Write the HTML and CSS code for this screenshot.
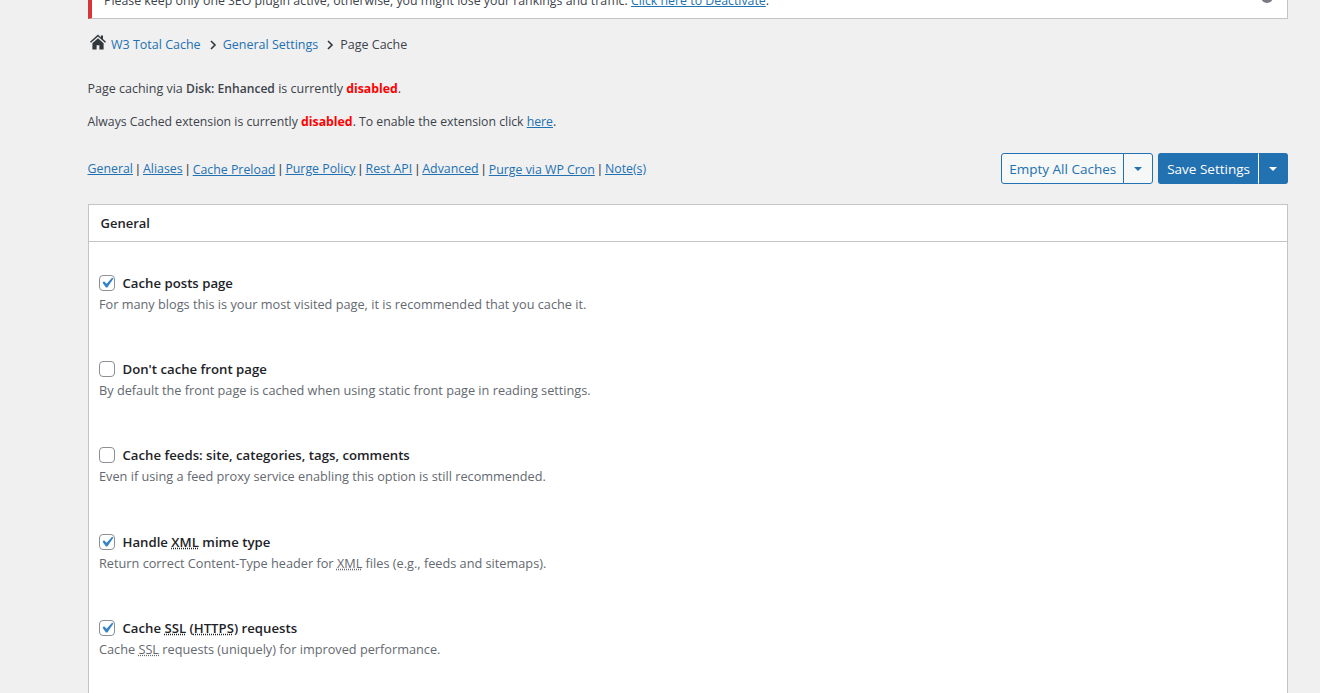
FILE: index.html
```html
<!DOCTYPE html>
<html lang="en">
<head>
<meta charset="utf-8">
<title>Page Cache</title>
<link rel="stylesheet" href="styles.css">
</head>
<body>
<main class="wrap">
  <div class="notice">
    <p class="notice-text">Please keep only one SEO plugin active, otherwise, you might lose your rankings and traffic. <a href="#">Click here to Deactivate</a>.</p>
    <svg class="notice-x" viewBox="0 0 12 12" width="12" height="12"><circle cx="6" cy="6" r="6" fill="#787c82"/></svg>
  </div>
  <nav class="crumbs">
    <svg class="home" viewBox="0 0 16 16" width="16" height="16"><path fill="#32373c" d="M8 .5 0 7.7l1 1.1L8 2.6l7 6.2 1-1.1-3-2.7V1.5h-2.2v2.1zM2.4 9.2V15.5h4.2v-4.3h2.8v4.3h4.2V9.2L8 4.2z"/></svg>
    <a href="#">W3 Total Cache</a>
    <svg class="chev" viewBox="0 0 8 10" width="8" height="10"><path d="M2 1l4 4-4 4" fill="none" stroke="#32373c" stroke-width="1.6"/></svg>
    <a href="#">General Settings</a>
    <svg class="chev" viewBox="0 0 8 10" width="8" height="10"><path d="M2 1l4 4-4 4" fill="none" stroke="#32373c" stroke-width="1.6"/></svg>
    <span>Page Cache</span>
  </nav>
  <p class="status status-first">Page caching via <strong>Disk: Enhanced</strong> is currently <span class="off">disabled</span>.</p>
  <p class="status">Always Cached extension is currently <span class="off">disabled</span>. To enable the extension click <a href="#">here</a>.</p>
  <div class="toolbar">
    <div class="links">
      <a href="#">General</a><span class="sep"> | </span><a href="#">Aliases</a><span class="sep"> | </span><a href="#" class="low">Cache Preload</a><span class="sep"> | </span><a href="#">Purge Policy</a><span class="sep"> | </span><a href="#">Rest API</a><span class="sep"> | </span><a href="#">Advanced</a><span class="sep"> | </span><a href="#" class="low">Purge via WP Cron</a><span class="sep"> | </span><a href="#">Note(s)</a>
    </div>
    <div class="actions">
      <div class="split">
        <button class="btn">Empty All Caches</button><button class="btn caret-btn"><i class="caret"></i></button>
      </div>
      <div class="split primary">
        <button class="btn">Save Settings</button><button class="btn caret-btn"><i class="caret"></i></button>
      </div>
    </div>
  </div>
  <section class="box">
    <h2 class="box-title">General</h2>
    <div class="box-body">
      <div class="opt">
        <label class="opt-label"><input type="checkbox" class="cb" checked><span>Cache posts page</span></label>
        <p class="desc">For many blogs this is your most visited page, it is recommended that you cache it.</p>
      </div>
      <div class="opt">
        <label class="opt-label"><input type="checkbox" class="cb"><span>Don't cache front page</span></label>
        <p class="desc">By default the front page is cached when using static front page in reading settings.</p>
      </div>
      <div class="opt">
        <label class="opt-label"><input type="checkbox" class="cb"><span>Cache feeds: site, categories, tags, comments</span></label>
        <p class="desc">Even if using a feed proxy service enabling this option is still recommended.</p>
      </div>
      <div class="opt">
        <label class="opt-label"><input type="checkbox" class="cb" checked><span>Handle <abbr>XML</abbr> mime type</span></label>
        <p class="desc">Return correct Content-Type header for <abbr>XML</abbr> files (e.g., feeds and sitemaps).</p>
      </div>
      <div class="opt">
        <label class="opt-label"><input type="checkbox" class="cb" checked><span>Cache <abbr>SSL</abbr> (<abbr>HTTPS</abbr>) requests</span></label>
        <p class="desc">Cache <abbr>SSL</abbr> requests (uniquely) for improved performance.</p>
      </div>
    </div>
  </section>
</main>
</body>
</html>
```

FILE: styles.css
```css
html, body { margin: 0; padding: 0; height: 693px; overflow: hidden; background: #f0f0f1; }
body { font-family: "Open Sans", "Noto Sans", sans-serif; font-size: 12.5px; line-height: 18px; color: #3c434a; }
a { color: #2271b1; }
p { margin: 0; }
strong { font-weight: 600; font-size: 12.1px; }
.off { color: #f00; font-weight: 700; font-size: 12.3px; }
.wrap { margin: -17px 32px 0 88px; }
.notice { display: flex; justify-content: space-between; align-items: center; height: 36px; box-sizing: border-box; padding: 0 14px 0 12px; background: #fff; border: 1px solid #c3c4c7; border-left: 4px solid #d63638; }
.notice-text { font-size: 12.35px; }
.notice-x { margin-top: -8px; }
.crumbs { display: flex; align-items: center; height: 20px; margin-top: 16px; padding-left: 2px; }
.crumbs a { text-decoration: none; }
.home { margin: -6px 5px 0 0; }
.chev { margin: 0 6px 0 8px; }
.status { margin: 15px 0 0 -0.5px; font-size: 12.25px; }
.crumbs + .status { margin-top: 25px; }
.status-first { font-size: 12.5px; }
.toolbar { display: flex; justify-content: space-between; align-items: center; height: 31px; margin-top: 22px; }
.links { white-space: nowrap; font-size: 12.35px; padding-top: 1px; margin-left: -0.5px; }
.sep { font-family: "Liberation Sans", sans-serif; }
.low { vertical-align: -1px; }
.actions { display: flex; gap: 5px; }
.split { display: flex; height: 31px; }
.btn { font: inherit; font-size: 13.5px; height: 31px; padding: 0 7px; background: #f6f7f7; color: #2271b1; border: 1px solid #2271b1; border-radius: 3px 0 0 3px; }
.caret-btn { width: 30px; padding: 0; margin-left: -1px; border-radius: 0 3px 3px 0; display: flex; align-items: center; justify-content: center; }
.caret { display: block; width: 0; height: 0; border: 4px solid transparent; border-top-color: currentColor; border-bottom: 0; }
.primary .btn { background: #2271b1; color: #fff; border-color: #2271b1; }
.primary .btn:first-child { padding: 0 8px; border-right-color: #fff; }
.primary .caret-btn { margin-left: 0; border-left: 0; width: 29px; }
.box { margin-top: 20px; background: #fff; border: 1px solid #c3c4c7; height: 600px; }
.box-title { margin: 0; height: 36px; padding-left: 11.5px; font-size: 13px; font-weight: 600; line-height: 36px; color: #1d2327; border-bottom: 1px solid #c3c4c7; }
.box-body { padding: 30.9px 10px 0; }
.opt { height: 86.25px; }
.opt-label { display: flex; align-items: center; font-size: 13.2px; font-weight: 600; color: #1d2327; height: 20px; }
.cb { appearance: none; width: 16px; height: 16px; margin: 0 7.5px 0 0; background: #fff; border: 1px solid #8c8f94; border-radius: 4px; flex: none; }
.cb:checked { background: #fff url("data:image/svg+xml,%3Csvg xmlns='http://www.w3.org/2000/svg' viewBox='0 0 20 20'%3E%3Cpath d='M14.83 4.89l1.34.94-5.81 8.38H9.02L5.78 9.67l1.34-1.25 2.57 2.4z' fill='%233582c4'/%3E%3C/svg%3E") center / 21px 21px no-repeat; }
.desc { margin-top: 2px; color: #646970; font-size: 12.72px; font-weight: 500; }
abbr { text-decoration: underline dotted; }
```
